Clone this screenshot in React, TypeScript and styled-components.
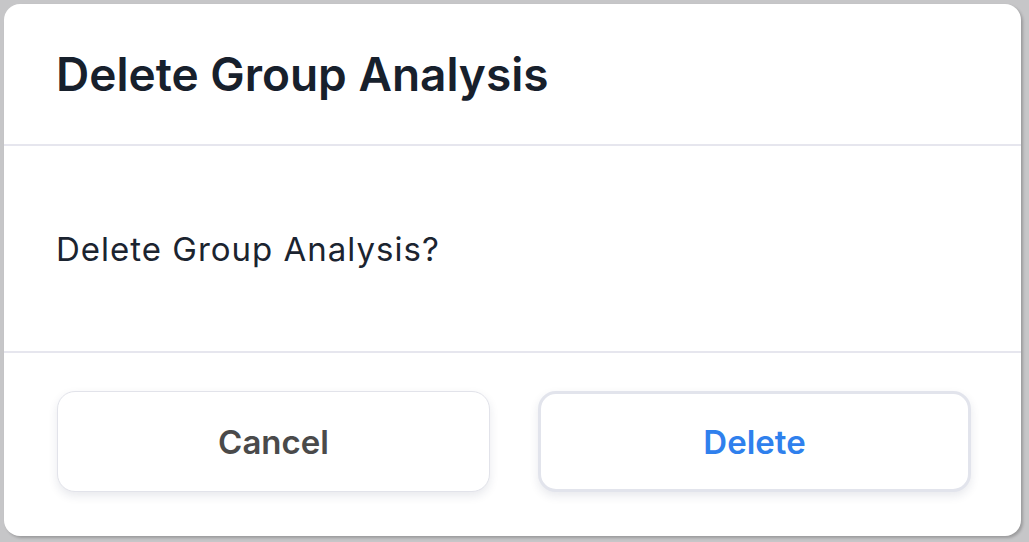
import React from "react";
import styled, { createGlobalStyle } from "styled-components";

const Global = createGlobalStyle`
  html, body { margin: 0; padding: 0; background: #c6c6c8; }
  body { font-family: Inter, "Noto Sans", sans-serif; }
  * { box-sizing: border-box; }
`;

const Stage = styled.div`
  width: 1029px;
  height: 542px;
  padding: 4px 8px 6px 4px;
  background: #c6c6c8;
`;

const Card = styled.div`
  height: 100%;
  background: #ffffff;
  border-radius: 16px;
  box-shadow: 2px 2px 3px rgba(0, 0, 0, 0.22);
  display: flex;
  flex-direction: column;
  overflow: hidden;
`;

const Header = styled.header`
  height: 142px;
  display: flex;
  align-items: center;
  padding: 0 52px;
  border-bottom: 2px solid #e6e6ee;
`;

const Title = styled.h1`
  margin: 0;
  font-family: Inter, sans-serif;
  font-weight: 600;
  font-size: 46px;
  color: #17202c;
`;

const Body = styled.div`
  height: 207px;
  display: flex;
  align-items: center;
  padding: 0 52px;
  border-bottom: 2px solid #e6e6ee;
`;

const Message = styled.p`
  margin: 0;
  font-family: Inter, sans-serif;
  font-size: 33px;
  letter-spacing: 1px;
  font-weight: 400;
  color: #1b2430;
`;

const Footer = styled.footer`
  flex: 1;
  display: grid;
  grid-template-columns: 1fr 1fr;
  gap: 48px;
  padding: 38px 50px 0 53px;
`;

const Button = styled.button<{ $primary?: boolean }>`
  height: 101px;
  border-radius: 18px;
  background: #ffffff;
  border: ${(p) => (p.$primary ? "3px solid #e2e4ec" : "1.5px solid #e2e3ea")};
  box-shadow: 0 4px 10px rgba(30, 40, 80, 0.1);
  font-family: Inter, sans-serif;
  font-weight: 600;
  font-size: 33px;
  color: ${(p) => (p.$primary ? "#2f80ed" : "#4a4a4a")};
  cursor: pointer;
`;

export default function App() {
  return (
    <>
      <Global />
      <Stage>
        <Card>
          <Header>
            <Title>Delete Group Analysis</Title>
          </Header>
          <Body>
            <Message>Delete Group Analysis?</Message>
          </Body>
          <Footer>
            <Button>Cancel</Button>
            <Button $primary>Delete</Button>
          </Footer>
        </Card>
      </Stage>
    </>
  );
}
